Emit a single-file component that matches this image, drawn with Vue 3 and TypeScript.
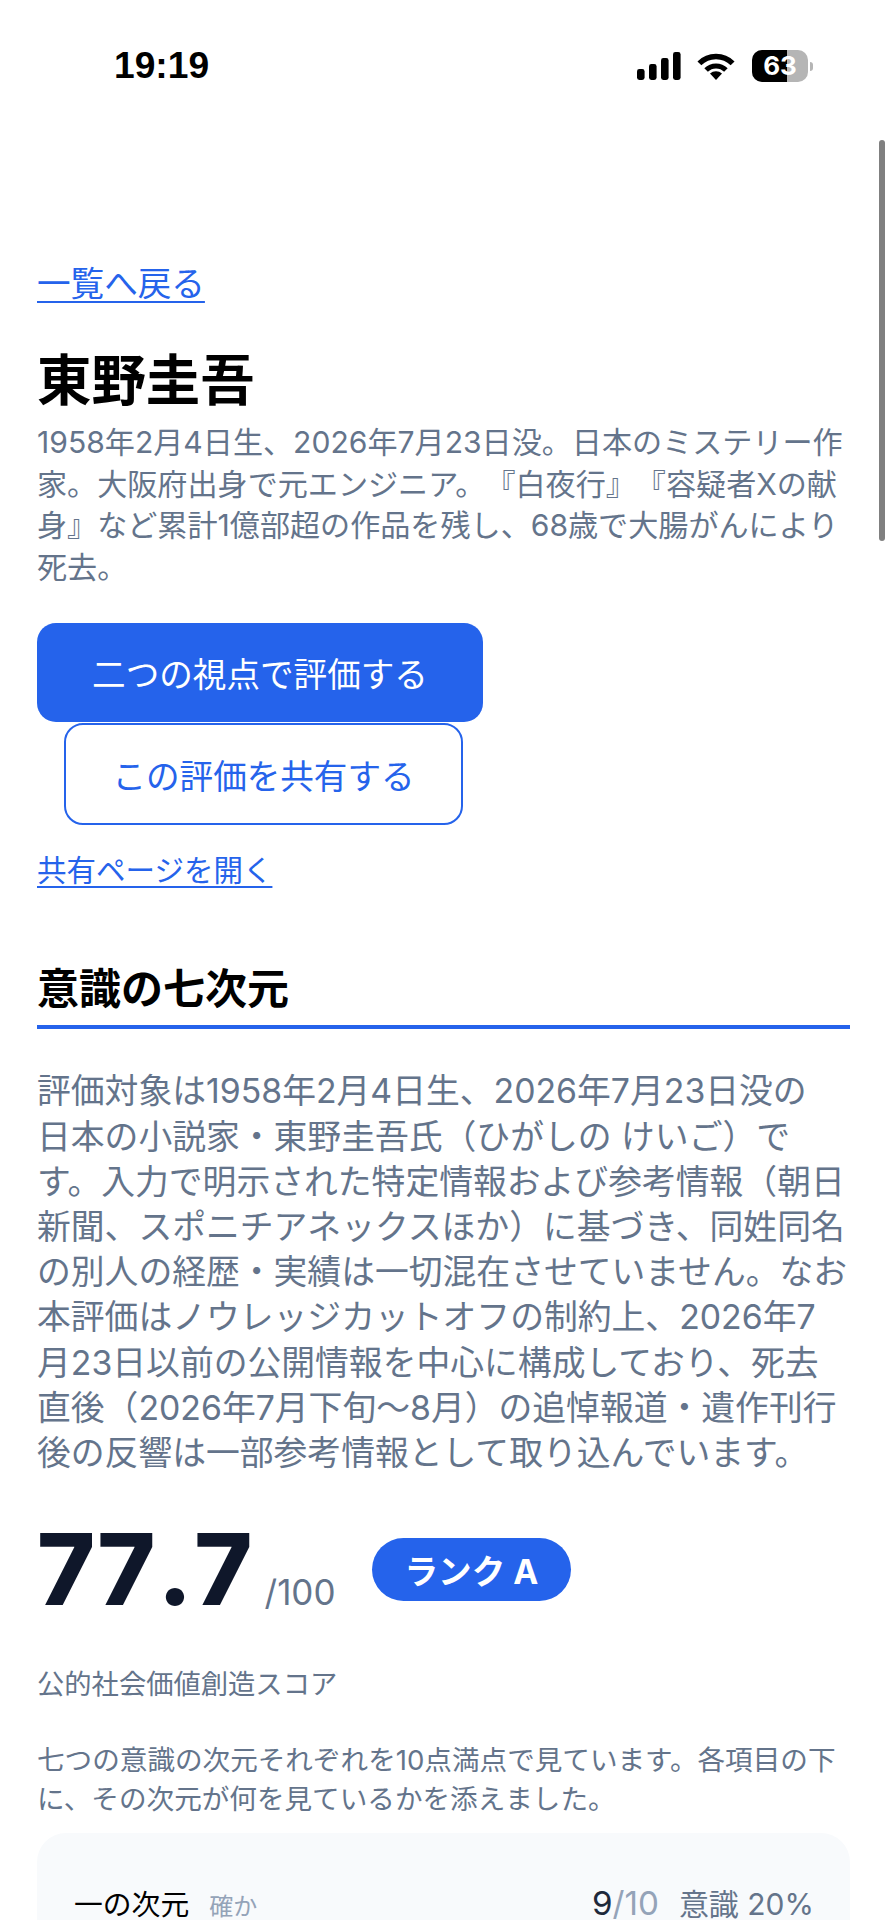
<script setup lang="ts">
const bars: { x: number; y: number; h: number }[] = [
  { x: 0, y: 17, h: 11 },
  { x: 12, y: 12, h: 16 },
  { x: 24, y: 6, h: 22 },
  { x: 36, y: 0, h: 28 },
]
</script>

<template>
  <div class="page">
    <header class="status">
      <span class="time">19:19</span>
      <div class="indicators">
        <svg class="signal" width="44" height="28" viewBox="0 0 44 28">
          <rect v-for="b in bars" :key="b.x" :x="b.x" :y="b.y" width="7.6" :height="b.h" rx="2.4" fill="#000" />
        </svg>
        <svg class="wifi" width="38" height="27" viewBox="0 0 38 27">
          <path d="M2.4 10.4A23.5 23.5 0 0 1 35.6 10.4" fill="none" stroke="#000" stroke-width="5.5" />
          <path d="M9.1 17.1A14 14 0 0 1 28.9 17.1" fill="none" stroke="#000" stroke-width="5" />
          <path d="M19 27L13 20.6A9 9 0 0 1 25 20.6Z" fill="#000" />
        </svg>
        <div class="battery">
          <div class="cell">
            <div class="cell-fill"></div>
            <span class="cell-num">63</span>
          </div>
          <div class="nub"></div>
        </div>
      </div>
    </header>

    <main class="content">
      <a class="link back" href="#">一覧へ戻る</a>
      <h1 class="title">東野圭吾</h1>
      <p class="desc">1958年2月4日生、2026年7月23日没。日本のミステリー作<br>家。大阪府出身で元エンジニア。『白夜行』『容疑者Xの献<br>身』など累計1億部超の作品を残し、68歳で大腸がんにより<br>死去。</p>

      <div class="actions">
        <button class="btn primary" type="button">二つの視点で評価する</button>
        <button class="btn outline" type="button">この評価を共有する</button>
      </div>
      <a class="link open" href="#">共有ページを開く</a>

      <h2 class="heading">意識の七次元</h2>
      <p class="body">評価対象は1958年2月4日生、2026年7月23日没の<br>日本の小説家・東野圭吾氏（ひがしの けいご）で<br>す。入力で明示された特定情報および参考情報（朝日<br>新聞、スポニチアネックスほか）に基づき、同姓同名<br>の別人の経歴・実績は一切混在させていません。なお<br>本評価はノウレッジカットオフの制約上、2026年7<br>月23日以前の公開情報を中心に構成しており、死去<br>直後（2026年7月下旬〜8月）の追悼報道・遺作刊行<br>後の反響は一部参考情報として取り込んでいます。</p>

      <div class="score-row">
        <div class="score">
          <span class="num">77.7</span>
          <span class="max">/100</span>
        </div>
        <span class="rank">ランク A</span>
      </div>
      <p class="label">公的社会価値創造スコア</p>
      <p class="intro">七つの意識の次元それぞれを10点満点で見ています。各項目の下<br>に、その次元が何を見ているかを添えました。</p>

      <section class="card">
        <div class="row">
          <div class="row-left">
            <span class="dim">一の次元</span>
            <span class="dim-sub">確か</span>
          </div>
          <div class="row-right">
            <span class="val">9<span class="of">/10</span></span>
            <span class="weight">意識 20%</span>
          </div>
        </div>
      </section>
    </main>

    <div class="scrollbar"></div>
  </div>
</template>

<style scoped>
.page {
  position: relative;
  width: 886px;
  height: 1920px;
  overflow: hidden;
  background: #fff;
  font-family: Inter, "Noto Sans CJK JP", sans-serif;
  color: #000;
  text-spacing-trim: space-all;
}
.status {
  height: 132px;
  box-sizing: border-box;
  padding: 0 73px 0 114px;
  display: flex;
  align-items: center;
  justify-content: space-between;
}
.time {
  font-family: "Liberation Sans", sans-serif;
  font-weight: 700;
  font-size: 37.2px;
  line-height: 1;
}
.indicators {
  display: flex;
  align-items: center;
}
.wifi {
  margin-left: 16px;
}
.battery {
  margin-left: 17px;
  display: flex;
  align-items: center;
}
.cell {
  position: relative;
  width: 56px;
  height: 32px;
  border-radius: 10px;
  background: #b5b5b5;
  overflow: hidden;
  display: flex;
  align-items: center;
  justify-content: center;
}
.cell-fill {
  position: absolute;
  left: 0;
  top: 0;
  bottom: 0;
  width: 35px;
  background: #000;
}
.cell-num {
  position: relative;
  color: #fff;
  font-weight: 700;
  font-size: 26px;
  line-height: 1;
}
.nub {
  width: 3px;
  height: 9px;
  margin-left: 2px;
  border-radius: 0 3px 3px 0;
  background: #b5b5b5;
}
.content {
  padding: 0 36px 0 37px;
}
.link {
  display: block;
  width: fit-content;
  font-size: 33.6px;
  line-height: 45px;
  color: #2563eb;
  text-decoration: underline;
  text-underline-offset: 5px;
  text-decoration-thickness: 2.4px;
}
.back {
  margin-top: 129px;
}
.title {
  margin: 39px 0 0;
  font-size: 54.4px;
  line-height: 70px;
  font-weight: 700;
}
.desc {
  margin: 7px 0 0;
  font-size: 30.1px;
  line-height: 41.6px;
  color: #64748b;
  white-space: nowrap;
}
.actions {
  margin-top: 35px;
  display: flex;
  flex-direction: column;
  align-items: flex-start;
  gap: 1px;
}
.btn {
  box-sizing: border-box;
  font-family: inherit;
  font-size: 33.6px;
  border-radius: 19px;
  padding: 0;
  display: flex;
  align-items: center;
  justify-content: center;
}
.primary {
  width: 446px;
  height: 99px;
  background: #2563eb;
  border: 0;
  color: #fff;
}
.outline {
  width: 399px;
  height: 102px;
  margin-left: 27px;
  background: #fff;
  border: 2.4px solid #2563eb;
  color: #2563eb;
}
.open {
  margin-top: 23px;
  font-size: 29.5px;
}
.heading {
  margin: 67px 0 0;
  padding-bottom: 7px;
  font-size: 42px;
  line-height: 58px;
  font-weight: 700;
  border-bottom: 4.8px solid #2563eb;
}
.body {
  margin: 39px 0 0;
  font-size: 33.8px;
  line-height: 45.2px;
  color: #64748b;
  white-space: nowrap;
}
.score-row {
  margin-top: 39px;
  height: 110px;
  display: flex;
  align-items: center;
}
.score {
  display: flex;
  align-items: baseline;
}
.num {
  font-size: 99px;
  line-height: 110px;
  font-weight: 800;
  color: #0f172a;
  font-kerning: none;
  letter-spacing: 2px;
}
.max {
  margin-left: 10px;
  font-size: 35px;
  color: #64748b;
}
.rank {
  margin-left: 36px;
  height: 63px;
  padding: 0 33px;
  display: flex;
  align-items: center;
  border-radius: 32px;
  background: #2563eb;
  color: #fff;
  font-size: 33.6px;
  font-weight: 700;
}
.label {
  margin: 42px 0 0;
  font-size: 27.3px;
  line-height: 38px;
  color: #64748b;
}
.intro {
  margin: 37px 0 0;
  font-size: 27.6px;
  line-height: 38.6px;
  color: #64748b;
  white-space: nowrap;
}
.card {
  margin-top: 15px;
  height: 200px;
  padding: 50px 36px 0 37px;
  box-sizing: border-box;
  border-radius: 29px;
  background: #f8fafc;
}
.row {
  display: flex;
  align-items: baseline;
  justify-content: space-between;
}
.row-left {
  display: flex;
  align-items: baseline;
  gap: 20px;
}
.dim {
  font-size: 28.8px;
  line-height: 40px;
  color: #000;
}
.dim-sub {
  font-size: 24px;
  color: #94a3b8;
}
.row-right {
  display: flex;
  align-items: baseline;
  gap: 20px;
  line-height: 40px;
}
.val {
  font-size: 33.2px;
  color: #1e293b;
}
.of {
  color: #94a3b8;
}
.weight {
  font-size: 30px;
  color: #64748b;
}
.scrollbar {
  position: absolute;
  right: 1px;
  top: 140px;
  width: 6px;
  height: 401px;
  border-radius: 3px;
  background: #808080;
}
</style>
